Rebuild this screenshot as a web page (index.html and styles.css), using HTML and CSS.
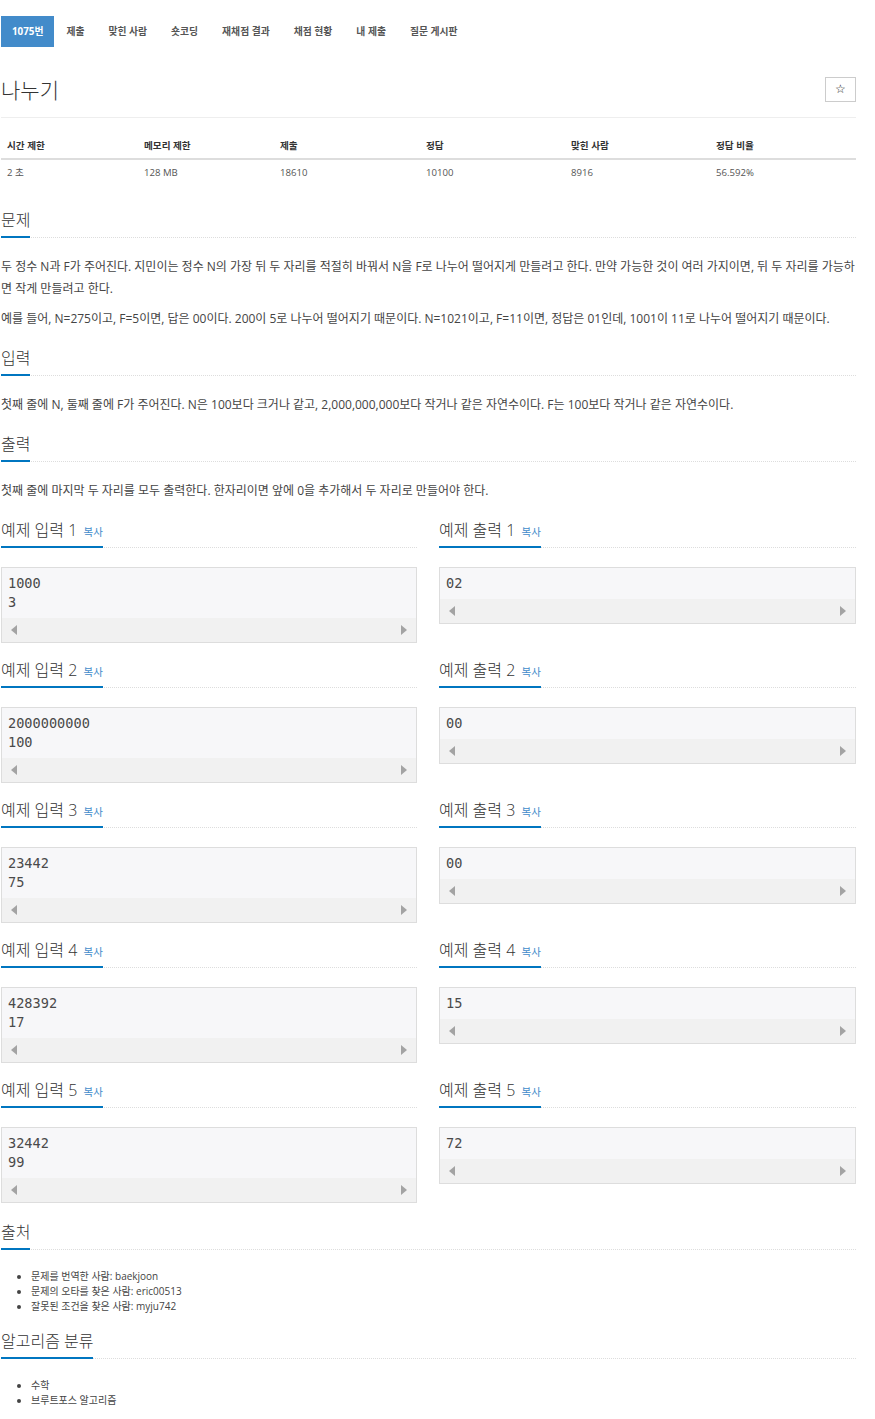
FILE: index.html
```html
<!DOCTYPE html>
<html lang="ko">
<head>
<meta charset="utf-8">
<title>나누기</title>
<link rel="stylesheet" href="styles.css">
</head>
<body>
<div class="page">
  <ul class="tabs">
    <li class="tab active">1075번</li>
    <li class="tab">제출</li>
    <li class="tab">맞힌 사람</li>
    <li class="tab">숏코딩</li>
    <li class="tab">재채점 결과</li>
    <li class="tab">채점 현황</li>
    <li class="tab">내 제출</li>
    <li class="tab">질문 게시판</li>
  </ul>

  <div class="page-header">
    <h1 class="title">나누기</h1>
    <button class="star">☆</button>
  </div>

  <table class="info">
    <colgroup>
      <col class="c1"><col class="c2"><col class="c3"><col class="c4"><col class="c5"><col class="c6">
    </colgroup>
    <thead>
      <tr><th>시간 제한</th><th>메모리 제한</th><th>제출</th><th>정답</th><th>맞힌 사람</th><th>정답 비율</th></tr>
    </thead>
    <tbody>
      <tr><td>2 초</td><td>128 MB</td><td>18610</td><td>10100</td><td>8916</td><td>56.592%</td></tr>
    </tbody>
  </table>

  <section class="sec">
    <div class="headline"><h2>문제</h2></div>
    <p>두 정수 N과 F가 주어진다. 지민이는 정수 N의 가장 뒤 두 자리를 적절히 바꿔서 N을 F로 나누어 떨어지게 만들려고 한다. 만약 가능한 것이 여러 가지이면, 뒤 두 자리를 가능하면 작게 만들려고 한다.</p>
    <p>예를 들어, N=275이고, F=5이면, 답은 00이다. 200이 5로 나누어 떨어지기 때문이다. N=1021이고, F=11이면, 정답은 01인데, 1001이 11로 나누어 떨어지기 때문이다.</p>
  </section>

  <section class="sec">
    <div class="headline"><h2>입력</h2></div>
    <p>첫째 줄에 N, 둘째 줄에 F가 주어진다. N은 100보다 크거나 같고, 2,000,000,000보다 작거나 같은 자연수이다. F는 100보다 작거나 같은 자연수이다.</p>
  </section>

  <section class="sec">
    <div class="headline"><h2>출력</h2></div>
    <p>첫째 줄에 마지막 두 자리를 모두 출력한다. 한자리이면 앞에 0을 추가해서 두 자리로 만들어야 한다.</p>
  </section>

  <div class="samples">
    <div class="sample">
      <div class="headline"><h2>예제 입력 1 <span class="copy">복사</span></h2></div>
      <div class="box"><pre>1000
3</pre><div class="scroll"><span class="arr-l"></span><span class="arr-r"></span></div></div>
    </div>
    <div class="sample">
      <div class="headline"><h2>예제 출력 1 <span class="copy">복사</span></h2></div>
      <div class="box"><pre>02</pre><div class="scroll"><span class="arr-l"></span><span class="arr-r"></span></div></div>
    </div>
  </div>

  <div class="samples">
    <div class="sample">
      <div class="headline"><h2>예제 입력 2 <span class="copy">복사</span></h2></div>
      <div class="box"><pre>2000000000
100</pre><div class="scroll"><span class="arr-l"></span><span class="arr-r"></span></div></div>
    </div>
    <div class="sample">
      <div class="headline"><h2>예제 출력 2 <span class="copy">복사</span></h2></div>
      <div class="box"><pre>00</pre><div class="scroll"><span class="arr-l"></span><span class="arr-r"></span></div></div>
    </div>
  </div>

  <div class="samples">
    <div class="sample">
      <div class="headline"><h2>예제 입력 3 <span class="copy">복사</span></h2></div>
      <div class="box"><pre>23442
75</pre><div class="scroll"><span class="arr-l"></span><span class="arr-r"></span></div></div>
    </div>
    <div class="sample">
      <div class="headline"><h2>예제 출력 3 <span class="copy">복사</span></h2></div>
      <div class="box"><pre>00</pre><div class="scroll"><span class="arr-l"></span><span class="arr-r"></span></div></div>
    </div>
  </div>

  <div class="samples">
    <div class="sample">
      <div class="headline"><h2>예제 입력 4 <span class="copy">복사</span></h2></div>
      <div class="box"><pre>428392
17</pre><div class="scroll"><span class="arr-l"></span><span class="arr-r"></span></div></div>
    </div>
    <div class="sample">
      <div class="headline"><h2>예제 출력 4 <span class="copy">복사</span></h2></div>
      <div class="box"><pre>15</pre><div class="scroll"><span class="arr-l"></span><span class="arr-r"></span></div></div>
    </div>
  </div>

  <div class="samples last">
    <div class="sample">
      <div class="headline"><h2>예제 입력 5 <span class="copy">복사</span></h2></div>
      <div class="box"><pre>32442
99</pre><div class="scroll"><span class="arr-l"></span><span class="arr-r"></span></div></div>
    </div>
    <div class="sample">
      <div class="headline"><h2>예제 출력 5 <span class="copy">복사</span></h2></div>
      <div class="box"><pre>72</pre><div class="scroll"><span class="arr-l"></span><span class="arr-r"></span></div></div>
    </div>
  </div>

  <section class="sec sec-list">
    <div class="headline"><h2>출처</h2></div>
    <ul class="list">
      <li>문제를 번역한 사람: baekjoon</li>
      <li>문제의 오타를 찾은 사람: eric00513</li>
      <li>잘못된 조건을 찾은 사람: myju742</li>
    </ul>
  </section>

  <section class="sec sec-list second">
    <div class="headline"><h2>알고리즘 분류</h2></div>
    <ul class="list">
      <li>수학</li>
      <li>브루트포스 알고리즘</li>
    </ul>
  </section>
</div>
</body>
</html>
```

FILE: styles.css
```css
* { box-sizing: border-box; }

html, body {
  margin: 0;
  padding: 0;
  background: #fff;
}

body {
  font-family: "Open Sans", "Noto Sans CJK KR", sans-serif;
  color: #444;
  font-size: 12px;
}

.page {
  width: 856px;
  padding-left: 1px;
  padding-top: 16px;
  display: flex;
  flex-direction: column;
}

/* tabs */
.tabs {
  display: flex;
  list-style: none;
  margin: 0;
  padding: 0;
  height: 31px;
}
.tab {
  padding: 0 12px;
  line-height: 31px;
  font-size: 9.8px;
  font-weight: 700;
  color: #555;
  white-space: nowrap;
}
.tab.active {
  background: #428bca;
  color: #fff;
  padding: 0 11px;
}

/* header */
.page-header {
  display: flex;
  justify-content: space-between;
  align-items: flex-start;
  margin-top: 30px;
  padding-bottom: 14px;
  border-bottom: 1px solid #eee;
}
.title {
  margin: 0;
  font-size: 21px;
  line-height: 26px;
  font-weight: 300;
  color: #333;
}
.star {
  width: 31px;
  height: 25px;
  margin: 0;
  padding: 0;
  background: #fff;
  border: 1px solid #ccc;
  font-family: "DejaVu Sans", sans-serif;
  font-size: 12px;
  color: #222;
  line-height: 23px;
}

/* info table */
.info {
  width: 855px;
  border-collapse: collapse;
  table-layout: fixed;
  margin-top: 15px;
  margin-bottom: 15px;
}
.c1 { width: 137px; }
.c2 { width: 136px; }
.c3 { width: 146px; }
.c4 { width: 145px; }
.c5 { width: 145px; }
.c6 { width: 146px; }
.info th {
  text-align: left;
  font-size: 9.6px;
  font-weight: 700;
  color: #333;
  line-height: 13px;
  padding: 6px;
  border-bottom: 2px solid #ddd;
}
.info td {
  font-size: 9.6px;
  color: #555;
  line-height: 13px;
  padding: 6px;
}

/* section */
.sec {
  display: flex;
  flex-direction: column;
}

.headline {
  display: flex;
  margin: 10px 0 18px;
  border-bottom: 1px dotted #ddd;
}
.headline h2 {
  margin: 0 0 -1px;
  padding-bottom: 6px;
  font-size: 16px;
  line-height: 20px;
  height: 28px;
  font-weight: 300;
  color: #333;
  border-bottom: 2px solid #0076c0;
  white-space: nowrap;
}
.copy {
  font-size: 10.5px;
  line-height: 10px;
  font-weight: 400;
  color: #428bca;
  margin-left: 2px;
}

.sec p {
  margin: 0 0 8px;
  line-height: 22px;
  font-size: 12px;
  color: #444;
}

/* samples */
.samples {
  display: grid;
  grid-template-columns: 416px 1fr;
  column-gap: 22px;
  margin-bottom: 7px;
}
.sample {
  display: flex;
  flex-direction: column;
}
.box {
  margin-top: 1px;
  border: 1px solid #ddd;
  background: #f7f7f9;
}
.box pre {
  margin: 0;
  padding: 6px;
  font-family: "DejaVu Sans Mono", monospace;
  font-size: 13.6px;
  line-height: 19px;
  color: #4a4a4a;
}
.scroll {
  height: 24px;
  background: #f1f1f1;
  display: flex;
  justify-content: space-between;
  align-items: center;
  padding: 0 9px;
}
.arr-l, .arr-r {
  width: 0;
  height: 0;
  border-top: 5px solid transparent;
  border-bottom: 5px solid transparent;
}
.arr-l { border-right: 6px solid #a3a3a3; }
.arr-r { border-left: 6px solid #a3a3a3; }

.samples.last { margin-bottom: 9px; }

.sec-list .headline { margin-bottom: 19px; }
.sec-list.second .headline { margin-top: 17px; }
.list {
  margin: 0;
  padding-left: 30px;
  font-size: 10px;
  line-height: 15px;
  color: #444;
}
```
